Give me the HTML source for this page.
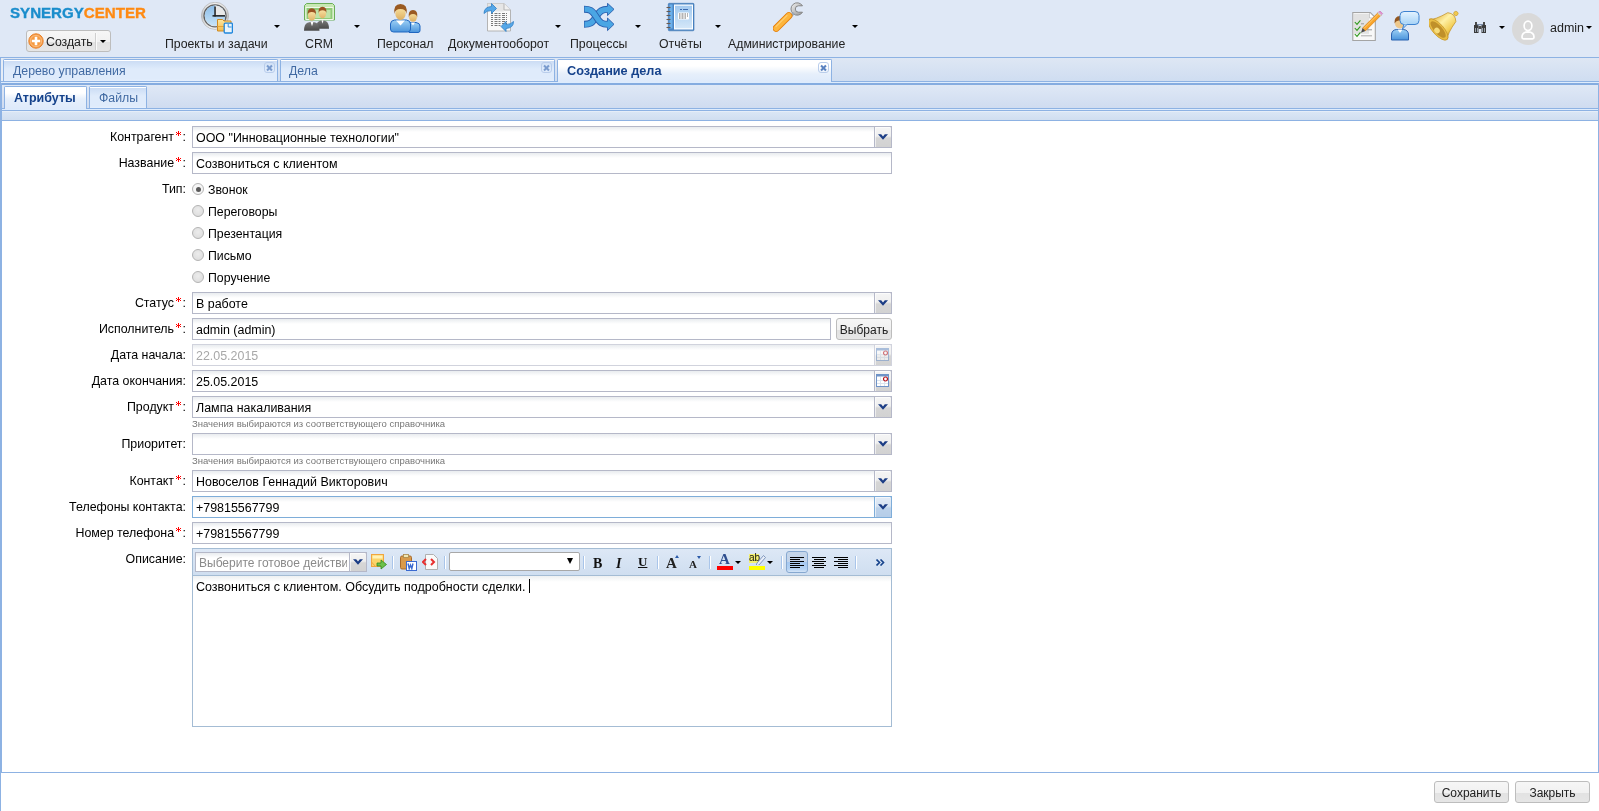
<!DOCTYPE html>
<html><head><meta charset="utf-8">
<style>
*{box-sizing:border-box;margin:0;padding:0}
html,body{width:1599px;height:811px;overflow:hidden;background:#fff;font-family:"Liberation Sans",sans-serif;font-size:12.3px;color:#000}
.a{position:absolute}
.t{position:absolute;white-space:nowrap;line-height:14px}
/* header */
#hdr{left:0;top:0;width:1599px;height:57px;background:#dfe8f6}
.mi{position:absolute;top:37px;color:#222;font-size:12.3px;white-space:nowrap;line-height:14px}
.arr{position:absolute;width:0;height:0;border-left:3px solid transparent;border-right:3px solid transparent;border-top:3px solid #000}
/* tabs */
.otab{position:absolute;top:59px;height:23px;border:1px solid #8db2e3;border-bottom:none;border-radius:2px 2px 0 0;background:linear-gradient(#c9daf3 0,#d5e4f8 5px,#dfebfb 9px,#dfebfb 19px,#e5effd 21px)}
.otab .in{position:absolute;left:0;top:0;right:0;height:1px;background:#fff}
.otxt{position:absolute;top:4px;left:8px;color:#416aa3;line-height:14px;white-space:nowrap}
.cls{position:absolute;top:2px;width:11px;height:11px;border:1px solid #b9cdeb;border-radius:3px}
/* form */
.lbl{position:absolute;right:1413px;font-size:12.4px;white-space:nowrap;line-height:14px;text-align:right}
.ast{display:inline-block;vertical-align:top;margin:1px 1.5px 0 2px}
.fld{position:absolute;left:192px;height:22px;border:1px solid #b5b8c8;background:linear-gradient(#e9ecef 0,#fff 5px,#fff)}
.fld .v{position:absolute;left:3px;top:4px;font-size:12.45px;line-height:14px;white-space:nowrap}
.trg{position:absolute;right:-1px;top:-1px;width:18px;height:22px;border:1px solid #b5b8c8;border-top-right-radius:2px;box-shadow:inset 1px 1px 0 rgba(255,255,255,.6);background:linear-gradient(#f5f5f5,#efefef 45%,#d6d6d6 55%,#d2d2d2)}
.hint{position:absolute;left:192px;font-size:9.5px;color:#777;white-space:nowrap;line-height:10px}
.radio{position:absolute;left:192px;width:12px;height:12px;border-radius:50%;border:1px solid #b3b3b3;background:radial-gradient(circle at 50% 40%,#ececec,#dadada)}
.rlbl{position:absolute;left:208px;margin-top:1px;line-height:14px;white-space:nowrap}
.btn{position:absolute;height:22px;border:1px solid #bdbdbd;border-radius:3px;background:linear-gradient(#f6f6f6 0,#f1f1f1 55%,#e2e2e2 56%,#e6e6e6 100%);color:#222;font-size:12px;text-align:center;line-height:20px;padding-top:1px;white-space:nowrap}
.chev{position:absolute;left:3px;top:7px}
.dis{border-color:#d1d3dd}
.dis .trg{border-color:#d1d3dd}
.foc{border-color:#7eadd9}
.foc .trg{border-color:#7eadd9;background:linear-gradient(#e2ebf6,#d8e4f2 45%,#bcd2ea 55%,#b6cde8)}
.cal{}
.calic{position:absolute;left:1px;top:3px}
.dim{opacity:.55}
.dot{position:absolute;left:2.5px;top:2.5px;width:5.5px;height:5.5px;border-radius:50%;background:#5a5a5a}
.x{position:absolute;left:1.5px;top:1.5px;width:6px;height:6px;opacity:.75}
.x:before,.x:after{content:"";position:absolute;left:-0.5px;top:2px;width:7px;height:2px;background:#5a82c0}
.x:before{transform:rotate(45deg)}.x:after{transform:rotate(-45deg)}
</style></head><body><div id="root" style="position:absolute;left:0;top:0;width:1599px;height:811px;will-change:transform">
<div id="hdr" class="a"></div>

<!-- logo -->
<div class="t" style="left:10px;top:3.5px;font-size:15.1px;font-weight:bold;line-height:17px;-webkit-text-stroke:0.35px"><span style="color:#1a8dcc;-webkit-text-stroke-color:#1a8dcc">SYNERGY</span><span style="color:#ff8a12;-webkit-text-stroke-color:#ff8a12">CENTER</span></div>

<!-- create button -->
<div class="btn" style="left:26px;top:30px;width:85px;height:22px;text-align:left"></div>
<div class="t" style="left:46px;top:35px;color:#222;font-size:12.3px">Создать</div>
<div class="a" style="left:95px;top:33px;width:1px;height:17px;background:#cfcfcf;box-shadow:1px 0 0 #fafafa"></div>
<div class="arr" style="left:100px;top:40px"></div>

<!-- menu labels -->
<div class="mi" style="left:165px">Проекты и задачи</div>
<div class="mi" style="left:305px">CRM</div>
<div class="mi" style="left:377px">Персонал</div>
<div class="mi" style="left:448px">Документооборот</div>
<div class="mi" style="left:570px">Процессы</div>
<div class="mi" style="left:659px">Отчёты</div>
<div class="mi" style="left:728px">Администрирование</div>
<div class="arr" style="left:274px;top:25px"></div>
<div class="arr" style="left:354px;top:25px"></div>
<div class="arr" style="left:555px;top:25px"></div>
<div class="arr" style="left:635px;top:25px"></div>
<div class="arr" style="left:715px;top:25px"></div>
<div class="arr" style="left:852px;top:25px"></div>

<div class="arr" style="left:1499px;top:26px"></div>
<div class="t" style="left:1550px;top:21px;color:#222;font-size:12.5px">admin</div>
<div class="arr" style="left:1586px;top:26px"></div>

<!-- ICONS -->
<!-- clock+folder -->
<svg class="a" style="left:201px;top:2px" width="32" height="32" viewBox="0 0 32 32">
<defs><linearGradient id="g1" x1="0" y1="0" x2="0" y2="1"><stop offset="0" stop-color="#f0f0f0"/><stop offset=".5" stop-color="#c4c4c4"/><stop offset="1" stop-color="#f4f4f4"/></linearGradient>
<linearGradient id="g2" x1="0" y1="0" x2="0" y2="1"><stop offset="0" stop-color="#8cbde8"/><stop offset="1" stop-color="#c8e4f8"/></linearGradient>
<linearGradient id="g3" x1="0" y1="0" x2="0" y2="1"><stop offset="0" stop-color="#fde7a0"/><stop offset="1" stop-color="#f4bb4c"/></linearGradient></defs>
<circle cx="14" cy="13.8" r="13.6" fill="url(#g1)" stroke="#a8a8a8" stroke-width=".6"/>
<circle cx="14" cy="13.8" r="11" fill="none" stroke="#3a3a3a" stroke-width="1.2" opacity=".75"/>
<circle cx="14" cy="13.8" r="10.3" fill="url(#g2)"/><path d="M14 13.8 V3.5 A10.3 10.3 0 0 1 24.3 13.8z" fill="#e8e8e8"/>
<rect x="13.3" y="4.5" width="1.5" height="10" fill="#1e1e1e"/>
<rect x="11.5" y="13.1" width="12.5" height="1.5" fill="#1e1e1e"/>
<path d="M16.5 17.5 h5 l1.5 1.5 h7 v10 h-13.5z" fill="url(#g3)" stroke="#d08a20" stroke-width="1"/>
<path d="M16.5 24.5 h13.5" stroke="#e7a536" stroke-width="1"/>
<rect x="23.2" y="21.2" width="8.2" height="9.8" rx="1" fill="#eaf4fb" stroke="#1f86dc" stroke-width="1.3"/>
<path d="M27.2 22 v3 h3.4" fill="none" stroke="#1f86dc" stroke-width=".9"/>
</svg>
<!-- CRM -->
<svg class="a" style="left:303px;top:2px" width="32" height="32" viewBox="0 0 32 32">
<defs><linearGradient id="gs" x1="0" y1="0" x2="0" y2="1"><stop offset="0" stop-color="#7a7a7a"/><stop offset="1" stop-color="#4a4a4a"/></linearGradient>
<linearGradient id="gf" x1="0" y1="0" x2="0" y2="1"><stop offset="0" stop-color="#fbe6a8"/><stop offset="1" stop-color="#e0b468"/></linearGradient></defs>
<path d="M1.5 3.5 l2-2 h26 l2 2 v14.5 h-30z" fill="#c8e8b4" stroke="#6aae58" stroke-width="1"/>
<rect x="3" y="5.5" width="27" height="12" fill="#8fcb78" stroke="#f0f8e8" stroke-width="1"/>
<rect x="5.5" y="8" width="22" height="8" fill="#bfe3a8"/>
<rect x="18.5" y="10.5" width="3" height="3" fill="#6aae58"/>
<g transform="translate(0,-1.8)"><path d="M13 28.5 q0-6 3-7.5 l3-1 h1 l3 1 q3 1.5 3 7.5z" fill="url(#gs)"/>
<path d="M18.5 20 l1 3.5 l1-3.5z" fill="#fff"/>
<ellipse cx="19.5" cy="13.5" rx="3.6" ry="4.8" fill="url(#gf)"/>
<path d="M15.5 13 q-.5-6.5 4-6.5 q4.5 0 4 6.5 q-.5-3-4-3 q-3.5 0-4 3z" fill="#9a5222"/>
<path d="M1 30.5 q0-6.5 3.5-8 l3.5-1 h1.5 l3.5 1 q3.5 1.5 3.5 8z" fill="url(#gs)"/>
<path d="M7.5 21.5 l1.5 4.5 l1.5-4.5z" fill="#fff"/>
<ellipse cx="8.8" cy="15.5" rx="3.8" ry="5" fill="url(#gf)"/>
<path d="M4.6 15 q-.5-7 4.2-7 q4.7 0 4.2 7 q-.5-3.2-4.2-3.2 q-3.7 0-4.2 3.2z" fill="#9a5222"/></g>
</svg>
<!-- Personal -->
<svg class="a" style="left:390px;top:2px" width="32" height="32" viewBox="0 0 32 32">
<defs><linearGradient id="g4" x1="0" y1="0" x2="0" y2="1"><stop offset="0" stop-color="#9ccff4"/><stop offset="1" stop-color="#4a94dc"/></linearGradient>
<linearGradient id="gf2" x1="0" y1="0" x2="0" y2="1"><stop offset="0" stop-color="#fbe3a0"/><stop offset="1" stop-color="#dcae62"/></linearGradient></defs>
<path d="M17 28.5 v-4.5 q0-3 3-3.5 h6 q4 .5 4 3.5 v4.5 q0 2-2 2 h-9z" fill="url(#g4)" stroke="#1f66c0" stroke-width="1"/>
<path d="M21 20.5 l2 3 l2-3z" fill="#fff"/>
<ellipse cx="23" cy="15" rx="4" ry="4.8" fill="url(#gf2)"/>
<path d="M18.8 15.5 q-1-7.5 4.2-7.5 q5.2 0 4.2 7.5 q-.3-3.5-4.2-3.5 q-3.9 0-4.2 3.5z" fill="#9a5a22"/>
<path d="M0.5 27 v-5 q0-3.5 4-4 h12 q4 .5 4 4 v5 q0 3-3 3 h-14 q-3 0-3-3z" fill="url(#g4)" stroke="#1f66c0" stroke-width="1"/>
<path d="M6 18.5 l4.5 5 l4.5-5z" fill="#fff"/>
<ellipse cx="10.5" cy="11.5" rx="5.2" ry="6.5" fill="url(#gf2)"/>
<path d="M4.5 12 q-1.5-10 6-10 q7.5 0 6 10 q-.5-5-6-5 q-5.5 0-6 5z" fill="#9a5a22"/>
</svg>
<!-- Docs -->
<svg class="a" style="left:483px;top:2px" width="32" height="32" viewBox="0 0 32 32">
<path d="M4.5 1.5 h16.5 l6.5 6.5 v21 h-23z" fill="#fafafa" stroke="#b4b4b4"/>
<path d="M4.5 1.5 h16.5 v8 h-16.5z" fill="#e6e6e6"/>
<path d="M21 1.5 v6.5 h6.5" fill="#f0f0f0" stroke="#b4b4b4"/>
<g stroke="#7a7a7a" stroke-width="1" stroke-dasharray="2 1.5 3 1"><path d="M8 11.5 h16"/><path d="M8 13.5 h16"/><path d="M8 15.5 h16"/><path d="M8 17.5 h16"/><path d="M8 19.5 h16"/><path d="M8 21.5 h16"/><path d="M8 23.5 h10"/></g>
<path d="M1 11.5 q0-6.5 7.5-7 v-3 l5 5 l-5 5 v-3 q-5 0-7.5 3z" fill="#56a8e8" stroke="#2f7ec4" stroke-width=".8"/>
<path d="M30.5 19.5 q0 6.5-7.5 7 v3 l-5-5 l5-5 v3 q5 0 7.5-3z" fill="#56a8e8" stroke="#2f7ec4" stroke-width=".8"/>
</svg>
<!-- Processes -->
<svg class="a" style="left:583px;top:3px" width="32" height="32" viewBox="0 0 32 32">
<g fill="none" stroke-linecap="butt">
<path d="M1 21.3 C7 21.3 9 20.5 13 14 S19 6.3 25 6.3" stroke="#2a5fae" stroke-width="7"/>
<path d="M1.6 21.3 C7 21.3 9 20.5 13 14 S19 6.3 25.5 6.3" stroke="#4aa6e4" stroke-width="5.2"/>
</g>
<path d="M24.5 3.2 V0.3 L31 6.3 L24.5 12.6 V9.4" fill="#4aa6e4" stroke="#2a5fae" stroke-width=".9" stroke-linejoin="round"/>
<g fill="none">
<path d="M1 6.2 C7 6.2 9 7 13 13.5 S19 21.3 25 21.3" stroke="#2a5fae" stroke-width="7"/>
<path d="M1.6 6.2 C7 6.2 9 7 13 13.5 S19 21.3 25.5 21.3" stroke="#4aa6e4" stroke-width="5.2"/>
</g>
<path d="M24.5 18.2 V15 L31 21.3 L24.5 27.6 V24.4" fill="#4aa6e4" stroke="#2a5fae" stroke-width=".9" stroke-linejoin="round"/>
</svg>
<!-- Reports -->
<svg class="a" style="left:665px;top:2px" width="32" height="32" viewBox="0 0 32 32">
<defs><linearGradient id="g6" x1="0" y1="0" x2="0" y2="1"><stop offset="0" stop-color="#a2c9ef"/><stop offset="1" stop-color="#d4e7f8"/></linearGradient></defs>
<rect x="3.3" y="1.3" width="25.7" height="27.5" rx="1" fill="#4a85c4" stroke="#3d74b2" stroke-width=".6"/>
<rect x="4.5" y="2.5" width="3" height="24" fill="#6cb0ea"/>
<rect x="9" y="2.5" width="19" height="25" fill="#fff"/>
<rect x="10" y="3.7" width="17" height="22.6" fill="url(#g6)"/>
<g stroke="#6a5a50" stroke-width="1.1"><path d="M1.5 5.5 h4"/><path d="M1.5 9.5 h4"/><path d="M1.5 13.5 h4"/><path d="M1.5 17.5 h4"/><path d="M1.5 21.5 h4"/><path d="M1.5 25.5 h4"/></g>
<rect x="13" y="10.5" width="11" height="7" rx="1" fill="#fff"/>
<g stroke="#5a5a5a" stroke-width=".9" stroke-dasharray="1.5 1 2 1"><path d="M14 12 h9"/><path d="M14 14 h9"/><path d="M14 16 h8"/></g>
<g stroke="#3a6ab0" stroke-width="1" stroke-dasharray="2 1 4 0"><path d="M15 7.5 h8"/></g>
</svg>
<!-- Wrench -->
<svg class="a" style="left:773px;top:2px" width="32" height="32" viewBox="0 0 32 32">
<defs><linearGradient id="g8" x1="0" y1="0" x2="1" y2="1"><stop offset="0" stop-color="#f4f4f4"/><stop offset=".6" stop-color="#b8b8b8"/><stop offset="1" stop-color="#9a9a9a"/></linearGradient></defs>
<path d="M29.5 3.8 A6.2 6.2 0 1 0 29.5 10.2 L25.5 10.2 A3 3 0 0 1 25.5 3.8z" fill="url(#g8)" stroke="#7e7e7e" stroke-width=".9"/>
<path d="M17.5 14.5 L21 11" stroke="#9aa8b8" stroke-width="2.5"/>
<path d="M3.2 26.3 L15.8 13.7" stroke="#e57f0c" stroke-width="7.2" stroke-linecap="round"/>
<path d="M3.2 26.3 L15.8 13.7" stroke="#fdb53c" stroke-width="5.4" stroke-linecap="round"/>
<path d="M3 24.5 L14 13.5" stroke="#ffd27a" stroke-width="1.2" stroke-linecap="round" opacity=".8"/>
</svg>
<!-- create plus icon -->
<svg class="a" style="left:28px;top:33px" width="16" height="16" viewBox="0 0 16 16">
<circle cx="8" cy="8" r="7.2" fill="#f7a04a" stroke="#e8802a" stroke-width="1"/>
<circle cx="8" cy="8" r="5.6" fill="#f69a40" stroke="#fbc089" stroke-width=".8"/>
<path d="M6.7 3.8 h2.6 v2.9 h2.9 v2.6 h-2.9 v2.9 h-2.6 v-2.9 h-2.9 v-2.6 h2.9z" fill="#fff"/>
</svg>
<!-- tasks -->
<svg class="a" style="left:1352px;top:11px" width="32" height="32" viewBox="0 0 32 32">
<path d="M0.8 1.5 h17.5 l5 5 v23 h-22.5z" fill="#f8f8f8" stroke="#a4a4a4" stroke-width="1.1"/>
<rect x="2" y="2.8" width="15" height="20" fill="#e2e2e2"/>
<path d="M17.5 2 v5 h5" fill="#fff" stroke="#b8b8b8" stroke-width=".7"/>
<g fill="none" stroke="#2f9a1e" stroke-width="1.1"><path d="M2.8 11 l2.2 2.4 l3.4-4"/><path d="M2.8 17 l2.2 2.4 l3.4-4"/><path d="M2.8 23 l2.2 2.4 l3.4-4"/></g>
<g fill="#9a9a9a"><rect x="9" y="12.3" width="3" height="1"/><rect x="15" y="18.3" width="5" height="1"/><rect x="9" y="24.3" width="11" height="1" opacity=".8"/></g>
<path d="M10.6 17.1 L26.1 1.6 L28.9 4.4 L13.4 19.9z" fill="#f9a42a" stroke="#d0780e" stroke-width=".6"/>
<path d="M11.8 17.6 L26.6 2.8" stroke="#ffe090" stroke-width=".7"/>
<path d="M26.1 1.6 L27.9 -0.2 L30.7 2.6 L28.9 4.4z" fill="#e58fd0" stroke="#b86aa8" stroke-width=".5"/>
<path d="M25.5 2.2 L26.7 1 L29.5 3.8 L28.3 5z" fill="#d0d0d0"/>
<path d="M10.6 17.1 L13.4 19.9 L9 21.8z" fill="#4a4a4a"/>
</svg>
<!-- chat -->
<svg class="a" style="left:1391px;top:11px" width="32" height="32" viewBox="0 0 32 32">
<defs><linearGradient id="g9" x1="0" y1="0" x2="0" y2="1"><stop offset="0" stop-color="#e4f3ff"/><stop offset="1" stop-color="#a6d2f6"/></linearGradient></defs>
<path d="M0.5 29 v-5 q0-5 5-5.5 h7 q5 .5 5 5.5 v5z" fill="url(#g4)" stroke="#2a62b0" stroke-width="1"/>
<path d="M6.5 18.5 l2.5 3.5 l2.5-3.5z" fill="#fff"/>
<circle cx="9" cy="12.5" r="5" fill="#eec88c"/>
<path d="M3.5 12.5 q-.5-7.5 5.5-7.5 q3 0 4.5 2 l-1 4 q-2-2-4-1.5 q-3-.5-5 3z" fill="#93561f"/>
<rect x="9" y="0.5" width="19" height="13" rx="4" fill="url(#g9)" stroke="#3d82d0" stroke-width="1"/>
<path d="M13 13 l-1.5 5 l5-5z" fill="#bfe0fb" stroke="#3d82d0" stroke-width="1"/>
<rect x="12.5" y="12" width="4" height="1.2" fill="#b9ddf9"/>
</svg>
<!-- bell -->
<svg class="a" style="left:1429px;top:9px" width="33" height="34" viewBox="0 0 33 34">
<defs><linearGradient id="g10" x1="0" y1="0" x2="1" y2="0"><stop offset="0" stop-color="#e3b23a"/><stop offset=".4" stop-color="#fff1a6"/><stop offset=".75" stop-color="#f3cf58"/><stop offset="1" stop-color="#d4a22c"/></linearGradient></defs>
<g transform="translate(17.65 12.8) rotate(48) translate(-16.5 -15)">
<circle cx="16.5" cy="2.6" r="2.2" fill="#f0c94e" stroke="#c99a2e" stroke-width=".6"/>
<path d="M10.5 8 q6-5 12 0 q1.5 7 3.5 12 q1.5 4 4 6 l-27 0 q2.5-2 4-6 q2-5 3.5-12z" fill="url(#g10)" stroke="#c39228" stroke-width=".7"/>
<ellipse cx="16.5" cy="26.5" rx="13.5" ry="5.5" fill="#e8bd45" stroke="#c39228" stroke-width=".7"/>
<ellipse cx="16.5" cy="26.5" rx="10.5" ry="4" fill="#c0902a"/>
<ellipse cx="16.5" cy="28" rx="3" ry="2.6" fill="#f6dc7c"/>
</g>
</svg>
<!-- binoculars -->
<svg class="a" style="left:1473px;top:21px" width="14" height="13" viewBox="0 0 14 13">
<path d="M1 4 h4.5 v8 h-4.5z M8.5 4 h4.5 v8 h-4.5z" fill="#3a3a3a"/>
<path d="M2 1 h2 v3 h-2z M10 1 h2 v3 h-2z M5.5 5 h3 v3 h-3z" fill="#4a4a4a"/>
<path d="M2 7 h1 v4 h-1z M11 7 h1 v4 h-1z M4 7 h1 v4 h-1z M9 7 h1 v4 h-1z" fill="#9aa4b0"/>
<rect x="4" y="3" width="6" height="1.2" fill="#7a8ca8"/>
</svg>
<!-- avatar -->
<svg class="a" style="left:1512px;top:13px" width="32" height="32" viewBox="0 0 32 32">
<circle cx="16" cy="16" r="16" fill="#d9d9d9"/>
<ellipse cx="16" cy="12.8" rx="3.9" ry="4.7" fill="none" stroke="#fff" stroke-width="1.7"/>
<path d="M10 24 q0-5 6-5.2 q6 .2 6 5.2 v.3 q0 1.5-1.5 1.5 h-9 q-1.5 0-1.5-1.5z" fill="none" stroke="#fff" stroke-width="1.7" stroke-linejoin="round"/>
</svg>

<!-- outer tab strip -->
<div class="a" style="left:0;top:57px;width:1599px;height:1px;background:#8db2e3"></div>
<div class="a" style="left:0;top:58px;width:1599px;height:23px;background:linear-gradient(#dee7f4,#cfddf1)"></div>
<div class="a" style="left:0;top:81px;width:1599px;height:1px;background:#8db2e3"></div>
<div class="a" style="left:0;top:82px;width:1599px;height:1px;background:#deecfd"></div>
<div class="a" style="left:0;top:83px;width:1599px;height:2px;background:#85ace0"></div>

<div class="a" style="left:0;top:57px;width:1px;height:27px;background:#8db2e3"></div>
<div class="a" style="left:1px;top:58px;width:2px;height:23px;background:#e6edf7"></div>
<div class="otab" style="left:3px;width:275px;height:22px"><div class="in"></div><div class="cls" style="left:260px"><div class="x"></div></div><div class="otxt" style="left:9px">Дерево управления</div></div>
<div class="otab" style="left:280px;width:275px;height:22px"><div class="in"></div><div class="cls" style="left:260px"><div class="x"></div></div><div class="otxt">Дела</div></div>
<div class="otab" style="left:557px;width:275px;height:23px;background:linear-gradient(#fff,#fff 6px,#e6effb 14px,#deeafb)"><div class="in"></div><div class="cls" style="left:260px"><div class="x" style="opacity:1"></div></div><div class="otxt" style="left:9px;color:#15428b;font-weight:bold;font-size:12.7px">Создание дела</div></div>

<!-- inner strip -->
<div class="a" style="left:0;top:85px;width:1599px;height:23px;background:linear-gradient(#dfe8f6,#cfdcf0)"></div>
<div class="a" style="left:0;top:108px;width:1599px;height:1px;background:#8db2e3"></div>
<div class="a" style="left:0;top:109px;width:1599px;height:1px;background:#deecfd"></div>
<div class="a" style="left:0;top:110px;width:1599px;height:1px;background:#8db2e3"></div>
<div class="a" style="left:0;top:111px;width:1599px;height:9px;background:linear-gradient(#f1f5fb,#dae6f5 1px,#d0def0)"></div>
<div class="a" style="left:0;top:120px;width:1599px;height:1px;background:#8db2e3"></div>

<div class="otab" style="left:4px;top:86px;width:83px;height:23px;background:linear-gradient(#fff,#fff 6px,#e6effb 12px,#deeafb)"><div class="in"></div><div class="otxt" style="left:9px;top:4px;color:#15428b;font-weight:bold;font-size:12.5px">Атрибуты</div></div>
<div class="otab" style="left:89px;top:86px;width:58px;height:22px"><div class="in"></div><div class="otxt" style="left:9px;top:4px">Файлы</div></div>

<!-- side borders -->
<div class="a" style="left:0;top:83px;width:2px;height:690px;background:#8db2e3"></div>
<div class="a" style="left:0;top:772px;width:1px;height:39px;background:#8db2e3"></div>
<div class="a" style="left:1598px;top:83px;width:1px;height:690px;background:#8db2e3"></div>
<div class="a" style="left:0;top:772px;width:1599px;height:1px;background:#8db2e3"></div>

<!-- FORM -->
<div class="lbl" style="top:130px">Контрагент<svg class="ast" width="5" height="5" viewBox="0 0 5 5" shape-rendering="crispEdges"><path d="M2 0h1v5h-1zM0 1h1v1h-1zM4 1h1v1h-1zM1 2h1v1h-1zM3 2h1v1h-1zM0 3h1v1h-1zM4 3h1v1h-1z" fill="#f00"/></svg>:</div>
<div class="fld" style="top:126px;width:700px"><div class="v">ООО "Инновационные технологии"</div><div class="trg"><svg class="chev" width="10" height="6" viewBox="0 0 10 6"><path d="M0 0.3 h3.2 l1.8 2.2 l1.8-2.2 h3.2 l-5 5.5z" fill="#1b3d85"/></svg></div></div>
<div class="lbl" style="top:156px">Название<svg class="ast" width="5" height="5" viewBox="0 0 5 5" shape-rendering="crispEdges"><path d="M2 0h1v5h-1zM0 1h1v1h-1zM4 1h1v1h-1zM1 2h1v1h-1zM3 2h1v1h-1zM0 3h1v1h-1zM4 3h1v1h-1z" fill="#f00"/></svg>:</div>
<div class="fld" style="top:152px;width:700px"><div class="v">Созвониться с клиентом</div></div>
<div class="lbl" style="top:182px">Тип:</div>
<div class="radio" style="top:183px;background:#f6f6f6"><div class="dot"></div></div><div class="rlbl" style="top:182px">Звонок</div>
<div class="radio" style="top:205px"></div><div class="rlbl" style="top:204px">Переговоры</div>
<div class="radio" style="top:227px"></div><div class="rlbl" style="top:226px">Презентация</div>
<div class="radio" style="top:249px"></div><div class="rlbl" style="top:248px">Письмо</div>
<div class="radio" style="top:271px"></div><div class="rlbl" style="top:270px">Поручение</div>
<div class="lbl" style="top:296px">Статус<svg class="ast" width="5" height="5" viewBox="0 0 5 5" shape-rendering="crispEdges"><path d="M2 0h1v5h-1zM0 1h1v1h-1zM4 1h1v1h-1zM1 2h1v1h-1zM3 2h1v1h-1zM0 3h1v1h-1zM4 3h1v1h-1z" fill="#f00"/></svg>:</div>
<div class="fld" style="top:292px;width:700px"><div class="v">В работе</div><div class="trg"><svg class="chev" width="10" height="6" viewBox="0 0 10 6"><path d="M0 0.3 h3.2 l1.8 2.2 l1.8-2.2 h3.2 l-5 5.5z" fill="#1b3d85"/></svg></div></div>
<div class="lbl" style="top:322px">Исполнитель<svg class="ast" width="5" height="5" viewBox="0 0 5 5" shape-rendering="crispEdges"><path d="M2 0h1v5h-1zM0 1h1v1h-1zM4 1h1v1h-1zM1 2h1v1h-1zM3 2h1v1h-1zM0 3h1v1h-1zM4 3h1v1h-1z" fill="#f00"/></svg>:</div>
<div class="fld" style="top:318px;width:639px"><div class="v">admin (admin)</div></div>
<div class="btn" style="left:836px;top:318px;width:56px">Выбрать</div>
<div class="lbl" style="top:348px">Дата начала:</div>
<div class="fld dis" style="top:344px;width:700px"><div class="v" style="color:#a8a8a8">22.05.2015</div><div class="trg cal"><svg class="calic dim" width="13" height="13" viewBox="0 0 13 13"><rect x="0.5" y="0.5" width="12" height="12" fill="#fff" stroke="#6f93c8"/><rect x="0.5" y="0.5" width="12" height="2" fill="#6f93c8"/><g stroke="#dbe4ee" stroke-width="1"><path d="M4.5 3v9M8.5 3v9M1 6.5h11M1 9.5h11"/></g><circle cx="9.5" cy="5" r="2" fill="#fff" stroke="#b8141e" stroke-width="1.2"/></svg></div></div>
<div class="lbl" style="top:374px">Дата окончания:</div>
<div class="fld" style="top:370px;width:700px"><div class="v">25.05.2015</div><div class="trg cal"><svg class="calic" width="13" height="13" viewBox="0 0 13 13"><rect x="0.5" y="0.5" width="12" height="12" fill="#fff" stroke="#6f93c8"/><rect x="0.5" y="0.5" width="12" height="2" fill="#6f93c8"/><g stroke="#dbe4ee" stroke-width="1"><path d="M4.5 3v9M8.5 3v9M1 6.5h11M1 9.5h11"/></g><circle cx="9.5" cy="5" r="2" fill="#fff" stroke="#b8141e" stroke-width="1.2"/></svg></div></div>
<div class="lbl" style="top:400px">Продукт<svg class="ast" width="5" height="5" viewBox="0 0 5 5" shape-rendering="crispEdges"><path d="M2 0h1v5h-1zM0 1h1v1h-1zM4 1h1v1h-1zM1 2h1v1h-1zM3 2h1v1h-1zM0 3h1v1h-1zM4 3h1v1h-1z" fill="#f00"/></svg>:</div>
<div class="fld" style="top:396px;width:700px"><div class="v">Лампа накаливания</div><div class="trg"><svg class="chev" width="10" height="6" viewBox="0 0 10 6"><path d="M0 0.3 h3.2 l1.8 2.2 l1.8-2.2 h3.2 l-5 5.5z" fill="#1b3d85"/></svg></div></div>
<div class="hint" style="top:419px">Значения выбираются из соответствующего справочника</div>
<div class="lbl" style="top:437px">Приоритет:</div>
<div class="fld" style="top:433px;width:700px"><div class="trg"><svg class="chev" width="10" height="6" viewBox="0 0 10 6"><path d="M0 0.3 h3.2 l1.8 2.2 l1.8-2.2 h3.2 l-5 5.5z" fill="#1b3d85"/></svg></div></div>
<div class="hint" style="top:456px">Значения выбираются из соответствующего справочника</div>
<div class="lbl" style="top:474px">Контакт<svg class="ast" width="5" height="5" viewBox="0 0 5 5" shape-rendering="crispEdges"><path d="M2 0h1v5h-1zM0 1h1v1h-1zM4 1h1v1h-1zM1 2h1v1h-1zM3 2h1v1h-1zM0 3h1v1h-1zM4 3h1v1h-1z" fill="#f00"/></svg>:</div>
<div class="fld" style="top:470px;width:700px"><div class="v">Новоселов Геннадий Викторович</div><div class="trg"><svg class="chev" width="10" height="6" viewBox="0 0 10 6"><path d="M0 0.3 h3.2 l1.8 2.2 l1.8-2.2 h3.2 l-5 5.5z" fill="#1b3d85"/></svg></div></div>
<div class="lbl" style="top:500px">Телефоны контакта:</div>
<div class="fld foc" style="top:496px;width:700px"><div class="v">+79815567799</div><div class="trg"><svg class="chev" width="10" height="6" viewBox="0 0 10 6"><path d="M0 0.3 h3.2 l1.8 2.2 l1.8-2.2 h3.2 l-5 5.5z" fill="#1b3d85"/></svg></div></div>
<div class="lbl" style="top:526px">Номер телефона<svg class="ast" width="5" height="5" viewBox="0 0 5 5" shape-rendering="crispEdges"><path d="M2 0h1v5h-1zM0 1h1v1h-1zM4 1h1v1h-1zM1 2h1v1h-1zM3 2h1v1h-1zM0 3h1v1h-1zM4 3h1v1h-1z" fill="#f00"/></svg>:</div>
<div class="fld" style="top:522px;width:700px"><div class="v">+79815567799</div></div>
<div class="lbl" style="top:552px">Описание:</div>

<!-- editor -->
<div class="a" style="left:192px;top:548px;width:700px;height:179px;border:1px solid #a4bcd4;background:#fff"></div>
<div class="a" style="left:193px;top:549px;width:698px;height:27px;background:linear-gradient(#dde8f6,#cfdef0);border-bottom:1px solid #a4bcd4"></div>
<div class="a" style="left:193px;top:576px;width:698px;height:6px;background:linear-gradient(#eef0f2,#fff)"></div>
<div class="fld" style="left:195px;top:552px;width:172px;height:20px"><div class="v" style="color:#8a8a8a;top:3px;width:148px;overflow:hidden;font-size:12px">Выберите готовое действие</div><div class="trg" style="height:20px;width:18px"><svg class="chev" style="top:6px" width="10" height="6" viewBox="0 0 10 6"><path d="M0 0.3 h3.2 l1.8 2.2 l1.8-2.2 h3.2 l-5 5.5z" fill="#1b3d85"/></svg></div></div>
<!-- EDITOR TOOLBAR -->
<svg class="a" style="left:371px;top:554px" width="16" height="16" viewBox="0 0 16 16">
<rect x="0.5" y="0.5" width="12" height="12" fill="#fbd46a" stroke="#f0a640"/>
<rect x="1.5" y="1.5" width="10" height="3" fill="#fff2b8"/>
<path d="M0.5 8 l4 4.5" stroke="#f0a640" fill="none"/>
<path d="M6 9 h4 v-3 l5.5 4.5 l-5.5 4.5 v-3 h-4z" fill="#6cc04a" stroke="#2f8a20" stroke-width=".8"/>
</svg>
<div class="a" style="left:392px;top:556px;width:1px;height:13px;background:#a9c5ea;box-shadow:1px 0 0 #fff"></div>
<svg class="a" style="left:400px;top:554px" width="17" height="17" viewBox="0 0 17 17">
<rect x="0.5" y="2" width="11" height="13" rx="1.5" fill="#d99a4a" stroke="#a86a2a"/>
<rect x="3.5" y="0.5" width="5" height="3" fill="#f2e6b0" stroke="#a8884a" stroke-width=".8"/>
<rect x="6.5" y="7.5" width="10" height="9" fill="#fff" stroke="#3a6ad0"/>
<path d="M8 9.5 l1.2 5 l1.3-3.5 l1.3 3.5 l1.2-5" fill="none" stroke="#3a6ad0" stroke-width="1.4"/>
</svg>
<svg class="a" style="left:422px;top:554px" width="16" height="16" viewBox="0 0 16 16">
<path d="M3.5 0.5 h8 l4 4 v11 h-12z" fill="#fafafa" stroke="#b0b0b0"/>
<path d="M4 5 l-3 3 l3 3 M9 5 l3 3 l-3 3" fill="none" stroke="#e83030" stroke-width="2"/>
</svg>
<div class="a" style="left:444px;top:556px;width:1px;height:13px;background:#a9c5ea;box-shadow:1px 0 0 #fff"></div>
<div class="a" style="left:449px;top:552px;width:131px;height:19px;border:1px solid #a8a8a8;border-radius:2px;background:#fff"></div>
<div class="a" style="left:567px;top:558px;width:0;height:0;border-left:3px solid transparent;border-right:3px solid transparent;border-top:6px solid #000"></div>
<div class="a" style="left:583px;top:556px;width:1px;height:13px;background:#a9c5ea;box-shadow:1px 0 0 #fff"></div>
<div class="t" style="left:593px;top:557px;font-family:'Liberation Serif',serif;font-weight:bold;font-size:14px;line-height:14px;color:#111">B</div>
<div class="t" style="left:616px;top:557px;font-family:'Liberation Serif',serif;font-style:italic;font-weight:bold;font-size:14px;line-height:14px;color:#111">I</div>
<div class="t" style="left:638px;top:555px;font-family:'Liberation Serif',serif;font-weight:bold;font-size:13px;line-height:14px;color:#111;text-decoration:underline">U</div>
<div class="a" style="left:657px;top:556px;width:1px;height:13px;background:#a9c5ea;box-shadow:1px 0 0 #fff"></div>
<div class="t" style="left:666px;top:556px;font-family:'Liberation Serif',serif;font-weight:bold;font-size:15px;line-height:14px;color:#222">A</div>
<div class="a" style="left:675px;top:555px;width:0;height:0;border-left:2.5px solid transparent;border-right:2.5px solid transparent;border-bottom:3px solid #2a5aa8"></div>
<div class="t" style="left:689px;top:557px;font-family:'Liberation Serif',serif;font-weight:bold;font-size:11px;line-height:14px;color:#222">A</div>
<div class="a" style="left:697px;top:556px;width:0;height:0;border-left:2.5px solid transparent;border-right:2.5px solid transparent;border-top:3px solid #2a5aa8"></div>
<div class="a" style="left:709px;top:556px;width:1px;height:13px;background:#a9c5ea;box-shadow:1px 0 0 #fff"></div>
<div class="t" style="left:719px;top:552px;font-family:'Liberation Serif',serif;font-weight:bold;font-size:15px;line-height:14px;color:#2f4f8f">A</div>
<div class="a" style="left:717px;top:566px;width:16px;height:4px;background:#f00"></div>
<div class="arr" style="left:735px;top:561px"></div>
<div class="a" style="left:749px;top:554px;width:10px;height:9px;background:#f4f070"></div>
<div class="t" style="left:749px;top:552px;font-size:10px;line-height:11px;color:#111">ab</div>
<svg class="a" style="left:755px;top:553px" width="11" height="12" viewBox="0 0 11 12"><path d="M2 10 l6.5-7.5 l2 2 l-6.5 7.5 l-3 1z" fill="#e8eef8" stroke="#6a84b0" stroke-width=".8"/></svg>
<div class="a" style="left:749px;top:566px;width:16px;height:4px;background:#ff0"></div>
<div class="arr" style="left:767px;top:561px"></div>
<div class="a" style="left:781px;top:556px;width:1px;height:13px;background:#a9c5ea;box-shadow:1px 0 0 #fff"></div>
<div class="a" style="left:786px;top:551px;width:22px;height:22px;border:1px solid #86a8d0;border-radius:3px;background:linear-gradient(#c6d6ea 0,#c2d3ea 50%,#a6c8f0 51%,#b4d2f4 85%,#d4e4f6 100%)"></div>
<svg class="a" style="left:790px;top:557px" width="15" height="12" viewBox="0 0 15 12"><g fill="#000"><rect x="0" y="0" width="14" height="1"/><rect x="0" y="2" width="10" height="1"/><rect x="0" y="4" width="14" height="1"/><rect x="0" y="6" width="10" height="1"/><rect x="0" y="8" width="14" height="1"/><rect x="0" y="10" width="10" height="1"/></g></svg>
<svg class="a" style="left:812px;top:557px" width="15" height="12" viewBox="0 0 15 12"><g fill="#000"><rect x="0" y="0" width="14" height="1"/><rect x="2" y="2" width="10" height="1"/><rect x="0" y="4" width="14" height="1"/><rect x="2" y="6" width="10" height="1"/><rect x="0" y="8" width="14" height="1"/><rect x="2" y="10" width="10" height="1"/></g></svg>
<svg class="a" style="left:834px;top:557px" width="15" height="12" viewBox="0 0 15 12"><g fill="#000"><rect x="0" y="0" width="14" height="1"/><rect x="4" y="2" width="10" height="1"/><rect x="0" y="4" width="14" height="1"/><rect x="4" y="6" width="10" height="1"/><rect x="0" y="8" width="14" height="1"/><rect x="4" y="10" width="10" height="1"/></g></svg>
<div class="a" style="left:855px;top:556px;width:1px;height:13px;background:#a9c5ea;box-shadow:1px 0 0 #fff"></div>
<svg class="a" style="left:876px;top:559px" width="9" height="7" viewBox="0 0 9 7"><path d="M0.5 0.5 l3 3 l-3 3 M4.5 0.5 l3 3 l-3 3" fill="none" stroke="#15428b" stroke-width="1.6"/></svg>

<div class="t" style="left:196px;top:580px;font-size:12.5px">Созвониться с клиентом. Обсудить подробности сделки. </div>
<div class="a" style="left:529px;top:579px;width:1px;height:14px;background:#000"></div>


<!-- footer buttons -->
<div class="btn" style="left:1434px;top:781px;width:75px">Сохранить</div>
<div class="btn" style="left:1515px;top:781px;width:75px">Закрыть</div>

</div></body></html>
